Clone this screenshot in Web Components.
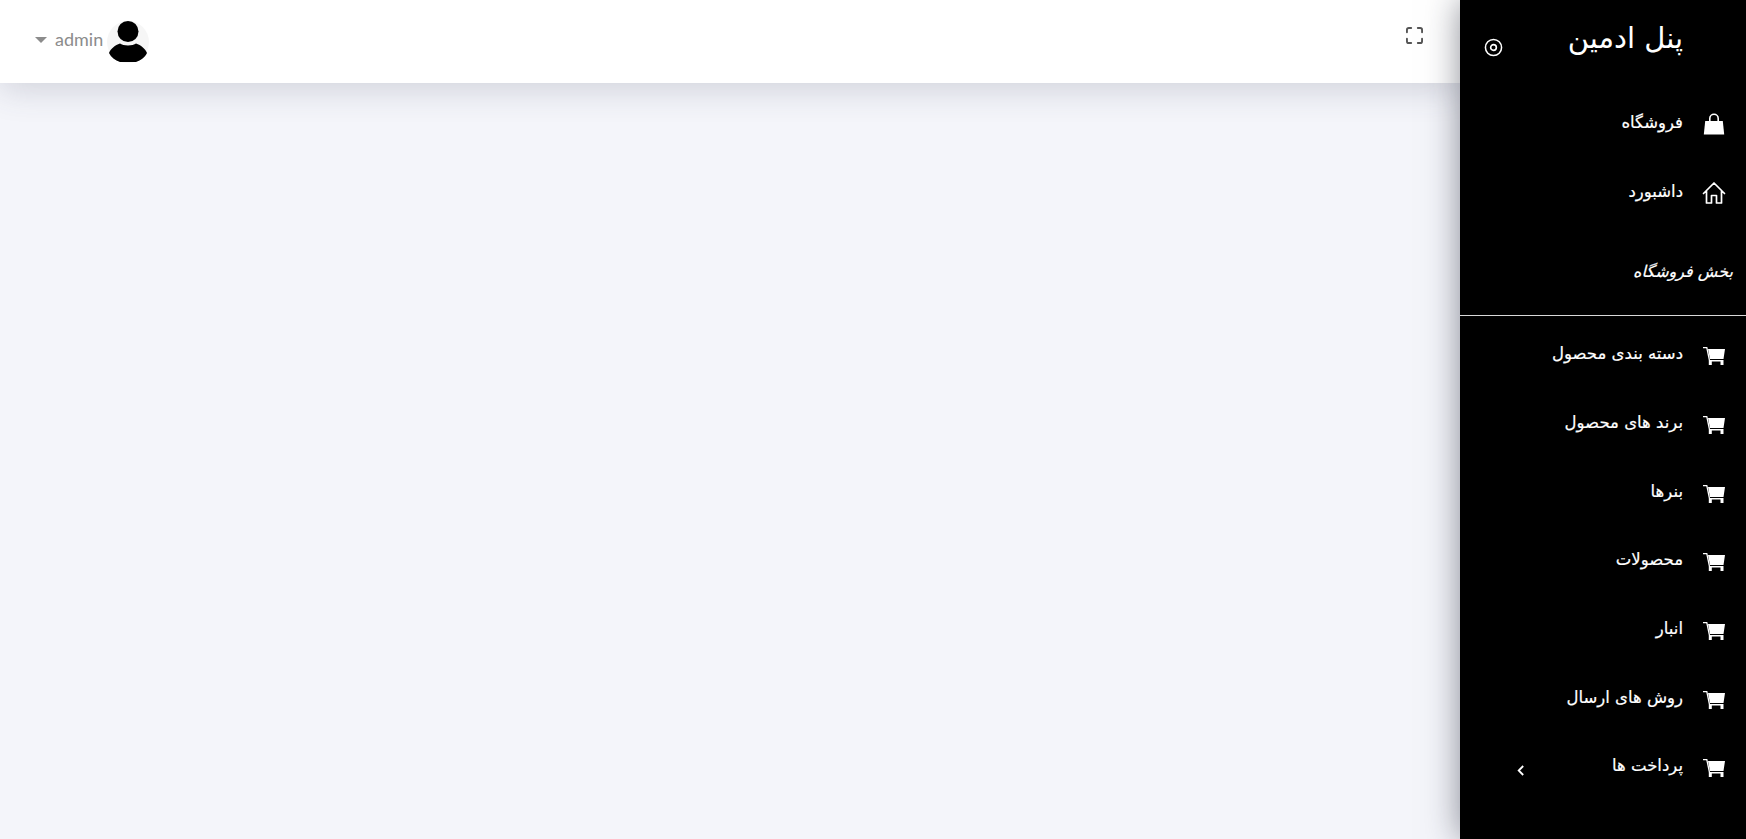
<!DOCTYPE html>
<html lang="fa">
<head>
<meta charset="utf-8">
<title>پنل ادمین</title>
<style>
html, body { margin: 0; height: 100%; overflow: hidden; background: #f4f5fa; }
body { font-family: "DejaVu Sans", "Noto Sans", sans-serif; }
</style>
</head>
<body>
<admin-layout>
    <top-bar slot="top"></top-bar>
    <side-bar slot="side" title-text="پنل ادمین">
        <nav-item icon="bag">فروشگاه</nav-item>
        <nav-item icon="home">داشبورد</nav-item>
        <nav-section>بخش فروشگاه</nav-section>
        <nav-item icon="cart">دسته بندی محصول</nav-item>
        <nav-item icon="cart">برند های محصول</nav-item>
        <nav-item icon="cart">بنرها</nav-item>
        <nav-item icon="cart">محصولات</nav-item>
        <nav-item icon="cart">انبار</nav-item>
        <nav-item icon="cart">روش های ارسال</nav-item>
        <nav-item icon="cart" arrow>پرداخت ها</nav-item>
    </side-bar>
</admin-layout>

<script>
const ICONS = {
    bag: `<svg viewBox="0 0 24 24" width="24" height="24"><path fill="#fff" d="M3.200 9h17.600l1.400 13.500H1.800z"/><path fill="none" stroke="#fff" stroke-width="1.600" d="M7.800 9.500V6.500a4.200 4.200 0 0 1 8.400 0v3"/></svg>`,
    home: `<svg viewBox="0 0 24 24" width="24" height="24"><path fill="none" stroke="#fff" stroke-width="1.700" stroke-linejoin="round" stroke-linecap="round" d="M1.500 12.500 12 2l10.500 10.500M4.500 10.500V22h5v-7.500h5V22h5V10.500"/></svg>`,
    cart: `<svg viewBox="0 0 24 24" width="24" height="24"><g transform="translate(1 4)"><path fill="none" stroke="#fff" stroke-width="1.300" d="M0 .7h3.800L6.400 13"/><path fill="#fff" d="M5 2h17l-1.500 10H7zM5.800 13h14.700v1.500H5.800zM5.800 14.500h3V18h-3zM17.500 14.500h3V18h-3z"/></g></svg>`
};

class AdminLayout extends HTMLElement {
    connectedCallback() {
        this.attachShadow({mode: "open"}).innerHTML = `
        <style>
            :host { display: flex; height: 100vh; direction: ltr; }
            .main { flex: 1; min-width: 0; }
            .side { flex: 0 0 286px; position: relative; }
        </style>
        <div class="main"><slot name="top"></slot></div>
        <div class="side"><slot name="side"></slot></div>`;
    }
}

class TopBar extends HTMLElement {
    connectedCallback() {
        this.attachShadow({mode: "open"}).innerHTML = `
        <style>
            :host {
                display: flex;
                align-items: center;
                justify-content: space-between;
                height: 83px;
                box-sizing: border-box;
                padding: 0 37px 0 35px;
                background: #fff;
                box-shadow: 0 6px 34px rgba(60, 66, 90, .2);
                font-family: Lato, sans-serif;
            }
            .user { display: flex; align-items: center; color: #8c8c8c; font-size: 18px; margin-top: -4px; }
            .caret {
                width: 0; height: 0;
                border-left: 6px solid transparent;
                border-right: 6px solid transparent;
                border-top: 6px solid #8c8c8c;
                margin-right: 8px;
            }
            .name { margin-top: -1px; }
            .avatar { display: block; margin-left: 3px; margin-top: 5px; }
            .full { display: block; margin-top: -12px; }
        </style>
        <div class="user">
            <span class="caret"></span>
            <span class="name">admin</span>
            <svg class="avatar" viewBox="0 0 44 44" width="44" height="44">
                <circle cx="22" cy="22" r="21" fill="#f6f6f6"/>
                <circle cx="22" cy="11.500" r="10.500" fill="#000"/>
                <path fill="#000" d="M14 23.500c3 2.500 13 2.500 16 0 5 1.500 9 5 11 9.500-2 4-6 7.500-11 9H14c-5-1.500-9-5-11-9 2-4.500 6-8 11-9.500z"/>
            </svg>
        </div>
        <svg class="full" viewBox="0 0 18 18" width="17" height="17" fill="none" stroke="#555" stroke-width="2" stroke-linecap="round">
            <path d="M1 5.500V3a2 2 0 0 1 2-2h2.500M12.500 1H15a2 2 0 0 1 2 2v2.500M17 12.500V15a2 2 0 0 1-2 2h-2.500M5.500 17H3a2 2 0 0 1-2-2v-2.500"/>
        </svg>`;
    }
}

class SideBar extends HTMLElement {
    connectedCallback() {
        this.attachShadow({mode: "open"}).innerHTML = `
        <style>
            :host {
                display: block;
                height: 100vh;
                overflow: hidden;
                box-sizing: border-box;
                background: #000;
                color: #fff;
                direction: rtl;
                box-shadow: 0 0 32px rgba(30, 34, 50, .5);
                position: relative;
            }
            .head {
                display: flex;
                align-items: center;
                justify-content: space-between;
                height: 88px;
                box-sizing: border-box;
                padding: 0 63px 12px 24px;
            }
            h1 { margin: 0; font-size: 29px; font-weight: 400; line-height: 1; }
            .dot { display: block; margin-top: 18px; }
        </style>
        <div class="head">
            <h1>${this.getAttribute("title-text")}</h1>
            <svg class="dot" viewBox="0 0 20 20" width="19" height="19" fill="none" stroke="#fff">
                <circle cx="10" cy="10" r="8.500" stroke-width="1.600"/>
                <circle cx="10" cy="10" r="3" stroke-width="1.700"/>
            </svg>
        </div>
        <slot></slot>`;
    }
}

class NavItem extends HTMLElement {
    connectedCallback() {
        const arrow = this.hasAttribute("arrow") ? `
            <svg class="arrow" viewBox="0 0 10 14" width="9" height="13" fill="none" stroke="#fff" stroke-width="2">
                <path d="M8 2 3 7l5 5"/>
            </svg>` : "";
        this.attachShadow({mode: "open"}).innerHTML = `
        <style>
            :host {
                display: flex;
                align-items: center;
                height: 68.700px;
                box-sizing: border-box;
                padding: 0 20px 0 56px;
                font-size: 16.500px;
                color: #fff;
                -webkit-text-stroke: .2px #fff;
            }
            .icon { display: block; width: 24px; height: 24px; margin-left: 19px; margin-top: 3px; }
            .text { flex: 1; white-space: nowrap; }
            .arrow { display: block; margin-top: 9px; }
        </style>
        <span class="icon">${ICONS[this.getAttribute("icon")]}</span>
        <span class="text"><slot></slot></span>
        ${arrow}`;
    }
}

class NavSection extends HTMLElement {
    connectedCallback() {
        this.attachShadow({mode: "open"}).innerHTML = `
        <style>
            :host {
                display: flex;
                align-items: center;
                height: 91px;
                box-sizing: border-box;
                padding: 2px 13px 0 0;
                margin-bottom: 3px;
                border-bottom: 1px solid #d8d8d8;
                font-size: 16px;
                font-style: italic;
                color: #fff;
                -webkit-text-stroke: .2px #fff;
            }
        </style>
        <slot></slot>`;
    }
}

customElements.define("admin-layout", AdminLayout);
customElements.define("top-bar", TopBar);
customElements.define("side-bar", SideBar);
customElements.define("nav-item", NavItem);
customElements.define("nav-section", NavSection);
</script>
</body>
</html>
